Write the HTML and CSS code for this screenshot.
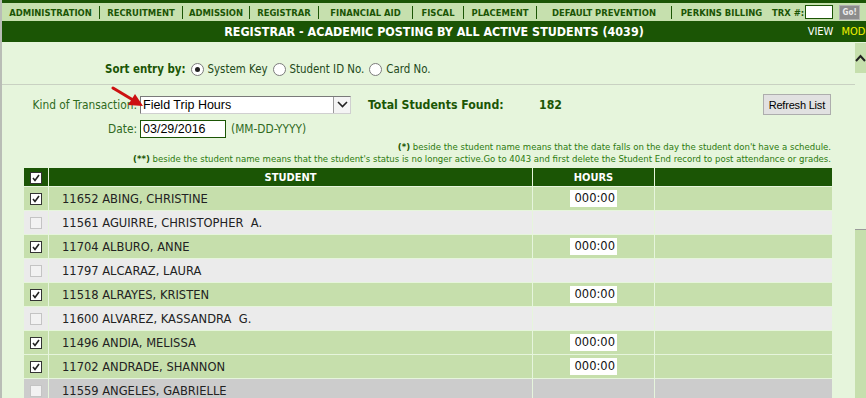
FILE: index.html
```html
<!DOCTYPE html>
<html lang="en">
<head>
  <meta charset="UTF-8" />
  <title>Registrar - Academic Posting by All Active Students</title>
  <link rel="stylesheet" href="styles.css">
</head>
<body>
  <div class="topnav">
    <div class="item w1">ADMINISTRATION</div>
    <div class="item w2">RECRUITMENT</div>
    <div class="item w3">ADMISSION</div>
    <div class="item w4">REGISTRAR</div>
    <div class="item w5">FINANCIAL AID</div>
    <div class="item w6">FISCAL</div>
    <div class="item w7">PLACEMENT</div>
    <div class="item w8">DEFAULT PREVENTION</div>
    <div class="item w9 last">PERKINS BILLING</div>
    <span class="trx">TRX #:</span>
    <span class="trx-input"></span>
    <span class="go">Go!</span>
  </div>

  <div class="titlebar">
    <span></span>
    <h1>REGISTRAR - ACADEMIC POSTING BY ALL ACTIVE STUDENTS (4039)</h1>
    <div class="modes"><span>VIEW</span><span class="mod">MODIFY</span></div>
  </div>

  <div class="main">
    <div class="content">
      <div class="sortrow">
        <b>Sort entry by:</b>
        <span class="radio checked"></span><span>System Key</span>
        <span class="radio"></span><span>Student ID No.</span>
        <span class="radio"></span><span>Card No.</span>
      </div>

      <!-- red pointer drawn over the form -->
      <svg class="pointer" width="34" height="24" viewBox="0 0 34 24">
        <line x1="2" y1="2" x2="22" y2="14" stroke="#cc1111" stroke-width="3" stroke-linecap="round"/>
        <polygon points="32,20 17,19 24,8" fill="#cc1111"/>
      </svg>

      <div class="formrow first">
        <label class="lbl">Kind of Transaction:</label>
        <div class="select">
          <span class="select-text">Field Trip Hours</span>
          <span class="select-btn">
            <svg width="11" height="7" viewBox="0 0 11 7"><polyline points="1,1 5.5,5.5 10,1" fill="none" stroke="#222" stroke-width="1.6"/></svg>
          </span>
        </div>
        <b class="total">Total Students Found:</b>
        <b class="count">182</b>
        <button class="refresh">Refresh List</button>
      </div>

      <div class="formrow second">
        <label class="lbl">Date:</label>
        <span class="date">03/29/2016</span>
        <span class="fmt">(MM-DD-YYYY)</span>
      </div>

      <div class="notes">
        <div><b>(*)</b> beside the student name means that the date falls on the day the student don't have a schedule.</div>
        <div><b>(**)</b> beside the student name means that the student's status is no longer active.Go to 4043 and first delete the Student End record to post attendance or grades.</div>
      </div>

      <table class="grid">
        <colgroup>
          <col class="c-chk"><col class="c-name"><col class="c-hrs"><col class="c-rest">
        </colgroup>
        <tr>
          <th><span class="chk on"></span></th>
          <th>STUDENT</th>
          <th>HOURS</th>
          <th></th>
        </tr>
        <tr class="green"><td><span class="chk on"></span></td><td class="name">11652 ABING, CHRISTINE</td><td class="hrs"><span class="hbox">000:00</span></td><td></td></tr>
        <tr class="grey"><td><span class="chk"></span></td><td class="name">11561 AGUIRRE, CHRISTOPHER&nbsp; A.</td><td></td><td></td></tr>
        <tr class="green"><td><span class="chk on"></span></td><td class="name">11704 ALBURO, ANNE</td><td class="hrs"><span class="hbox">000:00</span></td><td></td></tr>
        <tr class="grey"><td><span class="chk"></span></td><td class="name">11797 ALCARAZ, LAURA</td><td></td><td></td></tr>
        <tr class="green"><td><span class="chk on"></span></td><td class="name">11518 ALRAYES, KRISTEN</td><td class="hrs"><span class="hbox">000:00</span></td><td></td></tr>
        <tr class="grey"><td><span class="chk"></span></td><td class="name">11600 ALVAREZ, KASSANDRA&nbsp; G.</td><td></td><td></td></tr>
        <tr class="green"><td><span class="chk on"></span></td><td class="name">11496 ANDIA, MELISSA</td><td class="hrs"><span class="hbox">000:00</span></td><td></td></tr>
        <tr class="green"><td><span class="chk on"></span></td><td class="name">11702 ANDRADE, SHANNON</td><td class="hrs"><span class="hbox">000:00</span></td><td></td></tr>
        <tr class="dim"><td><span class="chk"></span></td><td class="name">11559 ANGELES, GABRIELLE</td><td></td><td></td></tr>
      </table>
    </div>

    <div class="scrollbar">
      <div class="scroll-up">
        <svg width="11" height="8" viewBox="0 0 11 8"><polyline points="1,7 5.5,2 10,7" fill="none" stroke="#222" stroke-width="2"/></svg>
      </div>
      <div class="scroll-track"></div>
      <div class="scroll-thumb"></div>
    </div>
  </div>
</body>
</html>
```

FILE: styles.css
```css
html, body {
  margin: 0;
  padding: 0;
}
body {
  font-family: "DejaVu Sans Condensed", "DejaVu Sans", sans-serif;
  background-color: #e6f5dc;
  border-left: 2px solid #b9bdb6;
  height: 398px;
  overflow: hidden;
}

/* top menu */
.topnav {
  display: flex;
  align-items: center;
  height: 18px;
  background: #c6e0ae;
  border-top: 3px solid #1b5505;
  color: #1b5505;
  font-weight: bold;
  font-size: 9.4px;
  white-space: nowrap;
}
.topnav .item {
  box-sizing: border-box;
  text-align: center;
  line-height: 13px;
  border-right: 1px solid #1b5505;
}
.topnav .last { border-right: none; }
.w1 { width: 98px; }
.w2 { width: 83px; }
.w3 { width: 67px; }
.w4 { width: 69px; }
.w5 { width: 94px; }
.w6 { width: 51px; }
.w7 { width: 73px; }
.w8 { width: 135px; }
.w9 { width: 99px; }
.trx { margin-left: 1px; }
.trx-input {
  box-sizing: border-box;
  width: 28px;
  height: 14px;
  margin-left: 1px;
  background: #fff;
  border: 1px solid #1b5505;
}
.go {
  box-sizing: border-box;
  width: 21px;
  height: 15px;
  margin-left: 6px;
  background: #8c8c8c;
  border: 1px solid #b0b0b0;
  color: #eee;
  font-size: 8px;
  line-height: 13px;
  text-align: center;
}

/* page title */
.titlebar {
  display: grid;
  grid-template-columns: 1fr auto 1fr;
  align-items: center;
  height: 21px;
  background: #1b5505;
  color: #fff;
  white-space: nowrap;
}
.titlebar h1 {
  margin: 0;
  font-size: 12.4px;
  font-weight: bold;
}
.modes {
  justify-self: end;
  margin-right: -14px;
  font-size: 11px;
}
.modes .mod {
  margin-left: 8px;
  color: #f2f200;
}

.main {
  display: flex;
}
.content {
  position: relative;
  flex: 1;
}

.sortrow {
  display: flex;
  align-items: center;
  height: 16px;
  padding: 19px 0 7px 103px;
  border-bottom: 1px solid #c9d1c2;
  font-size: 11.4px;
  color: #234a1a;
}
.sortrow b {
  color: #1b5505;
  margin-right: 5px;
}
.radio {
  box-sizing: border-box;
  width: 13px;
  height: 13px;
  margin-right: 4px;
  border: 1px solid #7c7c7c;
  border-radius: 50%;
  background: #fff;
  display: inline-flex;
  align-items: center;
  justify-content: center;
}
.radio + span { margin-right: 5px; }
.radio.checked::after {
  content: "";
  width: 5px;
  height: 5px;
  border-radius: 50%;
  background: #222;
}

.pointer {
  position: absolute;
  left: 109px;
  top: 44px;
}

.formrow {
  display: flex;
  align-items: center;
  font-size: 11.8px;
}
.formrow.first {
  height: 21px;
  margin-top: 9px;
}
.formrow.second {
  height: 18px;
  margin-top: 5px;
}
.lbl {
  width: 135px;
  text-align: right;
  color: #2f6a1c;
}
.select {
  box-sizing: border-box;
  display: flex;
  width: 211px;
  height: 18px;
  margin-left: 3px;
  background: #fff;
  border: 1px solid #7a7a7a;
  border-bottom-color: #d0d0d0;
  border-right-color: #d0d0d0;
}
.select-text {
  flex: 1;
  padding-left: 2px;
  font-family: "Liberation Sans", Arial, sans-serif;
  font-size: 12.5px;
  line-height: 16px;
}
.select-btn {
  box-sizing: border-box;
  width: 17px;
  display: flex;
  align-items: center;
  justify-content: center;
  background: #f4f4f4;
  border-left: 1px solid #9a9a9a;
}
.total {
  width: 171px;
  margin-left: 17px;
  font-size: 12.2px;
  color: #1b5505;
}
.count {
  font-size: 12.2px;
  color: #1b5505;
}
.refresh {
  margin-left: auto;
  margin-right: 24px;
  height: 21px;
  padding: 0 5px;
  background: #e1e1e1;
  border: 1px solid #adadad;
  border-radius: 0;
  font-family: "Liberation Sans", Arial, sans-serif;
  font-size: 11px;
  letter-spacing: -0.2px;
  color: #000;
}
.date {
  box-sizing: border-box;
  width: 86px;
  height: 18px;
  margin-left: 3px;
  padding-left: 2px;
  background: #fff;
  border: 1px solid #1b5505;
  font-family: "Liberation Sans", Arial, sans-serif;
  font-size: 12.5px;
  line-height: 16px;
}
.fmt {
  margin-left: 5px;
  color: #2f6a1c;
}

.notes {
  margin-top: 3px;
  padding-right: 24px;
  text-align: right;
  font-size: 9.5px;
  line-height: 12px;
  color: #2c7a0e;
}
.notes b {
  color: #1b5505;
}

/* student list */
.grid {
  width: 810px;
  margin: 2px 0 0 21px;
  border-collapse: separate;
  border-spacing: 1px;
  table-layout: fixed;
}
.c-chk { width: 24px; }
.c-name { width: 483px; }
.c-hrs { width: 121px; }
.c-rest { width: 177px; }
.grid th {
  height: 18px;
  padding: 0;
  background: #1b5505;
  color: #fff;
  font-size: 11px;
  font-weight: bold;
}
.grid td {
  height: 23px;
  padding: 0;
  font-family: "DejaVu Sans", sans-serif;
  font-size: 11.5px;
  color: #222;
}
.grid td:first-child, .grid th:first-child {
  text-align: center;
}
.green td { background: #c6dfac; }
.grey td { background: #ebebeb; }
.dim td { background: #cccccc; }
.name {
  padding-left: 13px !important;
  white-space: nowrap;
}
.hrs {
  text-align: center;
}
.hbox {
  display: inline-block;
  box-sizing: border-box;
  width: 47px;
  height: 17px;
  padding-right: 2px;
  background: #fff;
  text-align: right;
  line-height: 17px;
  color: #111;
}
.chk {
  display: inline-block;
  box-sizing: border-box;
  width: 12px;
  height: 12px;
  vertical-align: middle;
  background: #f2f2f2;
  border: 1px solid #c4c4c4;
}
.chk.on {
  background: #fff url("data:image/svg+xml;utf8,<svg xmlns='http://www.w3.org/2000/svg' width='10' height='10'><polyline points='2,5 4,7.5 8,2' fill='none' stroke='%23222' stroke-width='1.6'/></svg>") no-repeat center;
  border-color: #333;
}

/* fake frame scrollbar on the right */
.scrollbar {
  width: 11px;
  display: flex;
  flex-direction: column;
}
.scroll-up {
  height: 30px;
  margin-top: 1px;
  background: #c6dfad;
  display: flex;
  align-items: center;
  justify-content: flex-end;
}
.scroll-track {
  height: 156px;
}
.scroll-thumb {
  height: 200px;
  background: #c6dfad;
  border-top: 1px solid #9a9a9a;
}
```
